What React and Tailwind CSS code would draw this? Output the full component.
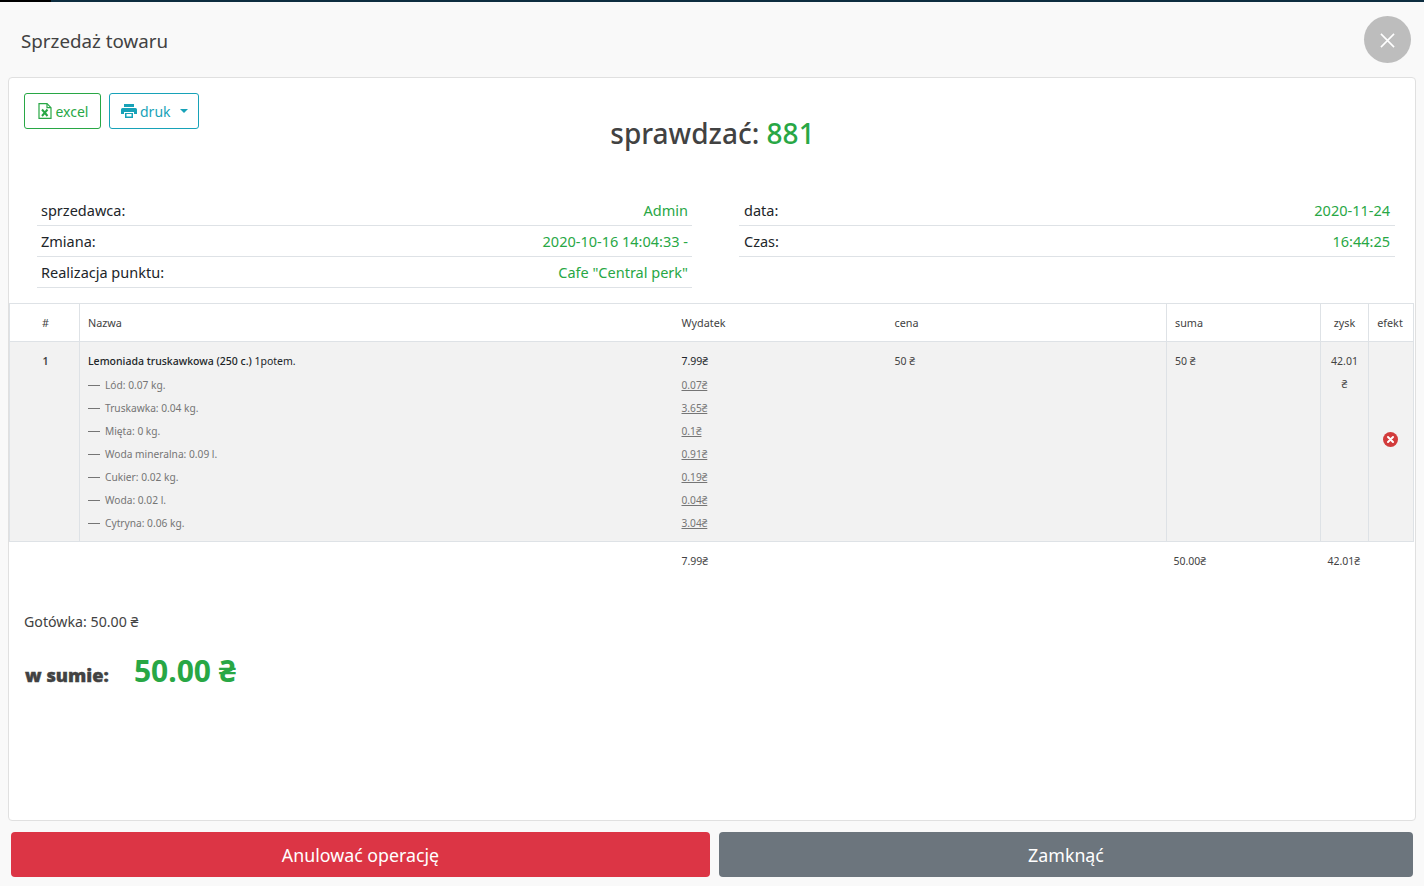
import React from "react";

const ingredients = [
  ["Lód: 0.07 kg.", "0.07₴"],
  ["Truskawka: 0.04 kg.", "3.65₴"],
  ["Mięta: 0 kg.", "0.1₴"],
  ["Woda mineralna: 0.09 l.", "0.91₴"],
  ["Cukier: 0.02 kg.", "0.19₴"],
  ["Woda: 0.02 l.", "0.04₴"],
  ["Cytryna: 0.06 kg.", "3.04₴"],
];

function InfoRow({ label, value, right }) {
  return (
    <div className={`flex h-[31px] items-center justify-between border-b border-[#dee2e6] text-[14.5px] leading-[20px] ${right ? "pl-[5px] pr-[5px]" : "px-1"}`}>
      <span className="text-[#212529]">{label}</span>
      <span className="text-[#28a745]">{value}</span>
    </div>
  );
}

function ExcelIcon() {
  return (
    <svg width="14" height="16" viewBox="0 0 14 16" fill="none" stroke="currentColor" strokeWidth="1.2">
      <path d="M1 .7h8l4 4v10.6H1z" />
      <path d="M9 .7v4h4" />
      <path d="M4 6.5l5.5 6.5M9.5 6.5L4 13" strokeWidth="2" />
    </svg>
  );
}

function PrintIcon() {
  return (
    <svg width="16" height="14" viewBox="0 0 16 14" fill="#17a2b8">
      <path d="M3 0h10v3H3z" />
      <path d="M1.500 4h13A1.500 1.500 0 0 1 16 5.500V10h-3V8H3v2H0V5.500A1.500 1.500 0 0 1 1.500 4z" />
      <path d="M4 9h8v5H4zM5.500 10v2.500h5V10z" fillRule="evenodd" />
    </svg>
  );
}

export default function App() {
  return (
    <div className="flex h-[886px] w-[1424px] flex-col overflow-hidden bg-[#f9f9f9] font-['Noto_Sans','Open_Sans',sans-serif] text-[#424242]">
      <div className="flex h-[2px] shrink-0">
        <div className="w-[51px] bg-black" />
        <div className="flex-1 bg-[#0d2d40]" />
      </div>

      <header className="flex h-[75px] shrink-0 items-center justify-between pl-[21px] pr-[13px]">
        <h1 className="mt-[3px] text-[18.75px] font-normal text-[#424242]">Sprzedaż towaru</h1>
        <button className="mt-[-1px] flex h-[47px] w-[47px] items-center justify-center rounded-full bg-[#bdbdbd] text-white">
          <svg className="mr-[1px] mt-[3px]" width="15" height="15" viewBox="0 0 16 16" stroke="currentColor" strokeWidth="1.7" fill="none">
            <path d="M1 1l14 14M15 1L1 15" />
          </svg>
        </button>
      </header>

      <main className="mx-2 flex min-h-0 flex-1 flex-col rounded-[4px] border border-[#e0e0e0] bg-white">
        <div className="relative h-[117px] shrink-0">
          <div className="flex gap-2 pl-[15px] pt-[15px]">
            <button className="flex h-[36px] w-[77px] items-center justify-center gap-[4px] rounded-[3px] border border-[#28a745] pl-[1px] text-[14px] text-[#28a745]">
              <ExcelIcon />
              excel
            </button>
            <button className="flex h-[36px] w-[90px] items-center justify-start gap-[3px] rounded-[3px] border border-[#17a2b8] pl-[11px] text-[14px] text-[#17a2b8]">
              <PrintIcon />
              druk
              <span className="ml-[6px] h-0 w-0 border-x-[4px] border-t-[4.5px] border-x-transparent border-t-[#17a2b8]" />
            </button>
          </div>
          <h2 className="absolute inset-x-0 top-[34px] pl-[1px] text-center text-[28px] font-medium leading-[42px] text-[#424242]">
            sprawdzać: <span className="text-[#28a745]">881</span>
          </h2>
        </div>

        <div className="flex shrink-0 gap-[47px] pl-[28px] pr-[20px]">
          <div className="w-[655px]">
            <InfoRow label="sprzedawca:" value="Admin" />
            <InfoRow label="Zmiana:" value="2020-10-16 14:04:33 -" />
            <InfoRow label="Realizacja punktu:" value={'Cafe "Central perk"'} />
          </div>
          <div className="flex-1">
            <InfoRow right label="data:" value="2020-11-24" />
            <InfoRow right label="Czas:" value="16:44:25" />
          </div>
        </div>

        <table className="mr-[1px] mt-[15px] w-[1404px] shrink-0 table-fixed border-collapse text-[10.5px] text-[#424242]">
          <colgroup>
            <col className="w-[70px]" />
            <col className="w-[594px]" />
            <col className="w-[213px]" />
            <col className="w-[280px]" />
            <col className="w-[154px]" />
            <col className="w-[48px]" />
            <col className="w-[45px]" />
          </colgroup>
          <thead>
            <tr className="h-[38px] border-y border-[#dee2e6] text-[10.8px]">
              <th className="border-x border-[#dee2e6] pl-[2px] pt-[2px] text-center font-normal">#</th>
              <th className="pl-2 pt-[2px] text-left font-normal">Nazwa</th>
              <th className="pl-2 pt-[2px] text-left font-normal">Wydatek</th>
              <th className="border-r border-[#dee2e6] pl-2 pt-[2px] text-left font-normal">cena</th>
              <th className="border-r border-[#dee2e6] pl-2 pt-[2px] text-left font-normal">suma</th>
              <th className="border-r border-[#dee2e6] pt-[2px] text-center font-normal">zysk</th>
              <th className="border-r border-[#dee2e6] pr-[2px] pt-[2px] text-center font-normal">efekt</th>
            </tr>
          </thead>
          <tbody>
            <tr className="h-[200px] border-b border-[#dee2e6] bg-[#f2f2f2] align-top">
              <td className="border-x border-[#dee2e6] pl-[2px] pt-[12px] text-center font-semibold">1</td>
              <td className="pl-2 pt-[10px]">
                <div className="h-[22px] leading-[18px] text-[#212529]">
                  <span className="font-medium">Lemoniada truskawkowa (250 c.)</span> 1potem.
                </div>
                {ingredients.map(([name]) => (
                  <div key={name} className="flex h-[23px] items-center text-[10.2px] text-[#757575]">
                    <span className="mr-[5px] inline-block h-px w-[12px] bg-[#757575]" />
                    {name}
                  </div>
                ))}
              </td>
              <td className="pl-2 pt-[10px]">
                <div className="h-[22px] leading-[18px] text-[#212529]">7.99₴</div>
                {ingredients.map(([name, cost]) => (
                  <div key={name} className="flex h-[23px] items-center text-[10.2px] text-[#757575] underline">
                    {cost}
                  </div>
                ))}
              </td>
              <td className="border-r border-[#dee2e6] pl-2 pt-[10px] leading-[18px]">50 ₴</td>
              <td className="border-r border-[#dee2e6] pl-2 pt-[10px] leading-[18px]">50 ₴</td>
              <td className="border-r border-[#dee2e6] px-2 pt-[11px] text-center leading-[23px]">
                <div className="-mt-[3px]">42.01 ₴</div>
              </td>
              <td className="border-r border-[#dee2e6] pb-[4px] pr-[2px] text-center align-middle">
                <svg className="mx-auto" width="15" height="15" viewBox="0 0 15 15">
                  <circle cx="7.500" cy="7.500" r="7.500" fill="#d23c3c" />
                  <path d="M5 5l5 5M10 5l-5 5" stroke="#fff" strokeWidth="2" strokeLinecap="round" />
                </svg>
              </td>
            </tr>
            <tr className="h-[38px]">
              <td />
              <td />
              <td className="pl-2 pt-[2px]">7.99₴</td>
              <td />
              <td className="pl-[7px] pt-[2px]">50.00₴</td>
              <td colSpan={2} className="pl-[7px] pt-[2px]">42.01₴</td>
            </tr>
          </tbody>
        </table>

        <p className="ml-[15px] mt-[31px] text-[14.2px] leading-[21px]">Gotówka: 50.00 ₴</p>
        <div className="ml-[16px] mt-[16px] flex items-baseline gap-[25px]">
          <span className="text-[18.300px] font-black text-[#424242] [-webkit-text-stroke:0.4px_#424242]">w sumie:</span>
          <span className="text-[30px] font-bold leading-[45px] text-[#28a745]">50.00 ₴</span>
        </div>
      </main>

      <footer className="flex h-[65px] shrink-0 gap-[9px] pb-[9px] pl-[11px] pr-[11px] pt-[11px]">
        <button className="w-[699px] rounded-[4px] bg-[#dc3545] pt-[1px] text-[17.800px] text-white">Anulować operację</button>
        <button className="flex-1 rounded-[4px] bg-[#6c757d] pt-[1px] text-[17.800px] text-white">Zamknąć</button>
      </footer>
    </div>
  );
}
